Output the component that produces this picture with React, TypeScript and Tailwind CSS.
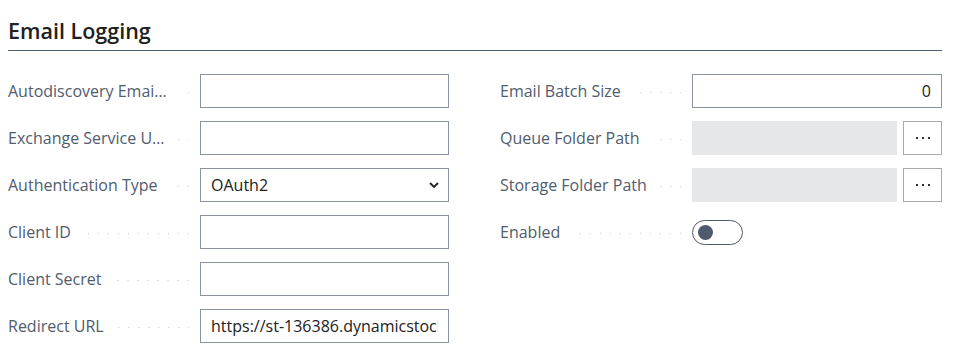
import React from 'react';

const Leader = () => (
  <div className="flex-1 ml-3 mr-[11px] h-px self-center mt-[2px] bg-[linear-gradient(to_left,#c4c4c4_1px,transparent_1px)] bg-[length:10px_1px] bg-repeat-x bg-[position:right_center]" />
);

const Field = ({ label, children }: { label: string; children: React.ReactNode }) => (
  <div className="flex h-[34px] items-center">
    <div className="flex w-[192px] shrink-0 items-center">
      <span className="whitespace-nowrap text-[#505c6d]">{label}</span>
      <Leader />
    </div>
    <div className="flex h-full flex-1 items-stretch">{children}</div>
  </div>
);

const TextBox = ({ value = '', right = false }: { value?: string; right?: boolean }) => (
  <input
    readOnly
    value={value}
    className={`h-full w-full min-w-0 border border-[#8a94a3] bg-white px-[10px] text-[#212121] outline-none ${right ? 'text-right' : ''}`}
  />
);

const AssistBox = () => (
  <>
    <div className="h-full flex-1 bg-[#e6e7e9]" />
    <button className="ml-[6px] flex w-[39px] items-center justify-center gap-[4px] border border-[#a8a8a8] bg-white">
      <span className="h-[2px] w-[2px] bg-[#333]" />
      <span className="h-[2px] w-[2px] bg-[#333]" />
      <span className="h-[2px] w-[2px] bg-[#333]" />
    </button>
  </>
);

export default function App() {
  return (
    <div className="h-[355px] w-[961px] bg-white pl-2 pr-[19px] font-['Open_Sans',sans-serif] text-[16px]">
      <div className="pt-[16px]">
        <h2 className="pb-[4px] text-[21.5px] leading-[30px] font-semibold text-[#212121]">Email Logging</h2>
        <div className="h-px bg-[#4d5b6b]" />
      </div>

      <div className="mt-[23px] grid grid-cols-[441px_442px] gap-x-[51px]">
        <div className="flex flex-col gap-[13px]">
          <Field label="Autodiscovery Emai…"><TextBox /></Field>
          <Field label="Exchange Service U…"><TextBox /></Field>
          <Field label="Authentication Type">
            <div className="relative h-full w-full">
              <select
                defaultValue="OAuth2"
                className="h-full w-full appearance-none border border-[#8a94a3] bg-white px-[10px] text-[#212121] outline-none"
              >
                <option>OAuth2</option>
                <option>Basic</option>
              </select>
              <svg className="pointer-events-none absolute right-[10px] top-1/2 -translate-y-1/2" width="10" height="7" viewBox="0 0 10 7">
                <path d="M1 1.5 L5 5.5 L9 1.5" fill="none" stroke="#212121" strokeWidth="1.8" />
              </svg>
            </div>
          </Field>
          <Field label="Client ID"><TextBox /></Field>
          <Field label="Client Secret"><TextBox /></Field>
          <Field label="Redirect URL"><TextBox value="https://st-136386.dynamicstocloud.com/OAuthLanding.htm" /></Field>
        </div>

        <div className="flex flex-col gap-[13px]">
          <Field label="Email Batch Size"><TextBox value="0" right /></Field>
          <Field label="Queue Folder Path"><AssistBox /></Field>
          <Field label="Storage Folder Path"><AssistBox /></Field>
          <Field label="Enabled">
            <div className="flex items-center">
              <button className="flex h-[25px] w-[51px] items-center rounded-full border border-[#4f5a6e] bg-white pl-[5px]">
                <span className="h-[15px] w-[15px] rounded-full bg-[#4f5a6e]" />
              </button>
            </div>
          </Field>
        </div>
      </div>
    </div>
  );
}
